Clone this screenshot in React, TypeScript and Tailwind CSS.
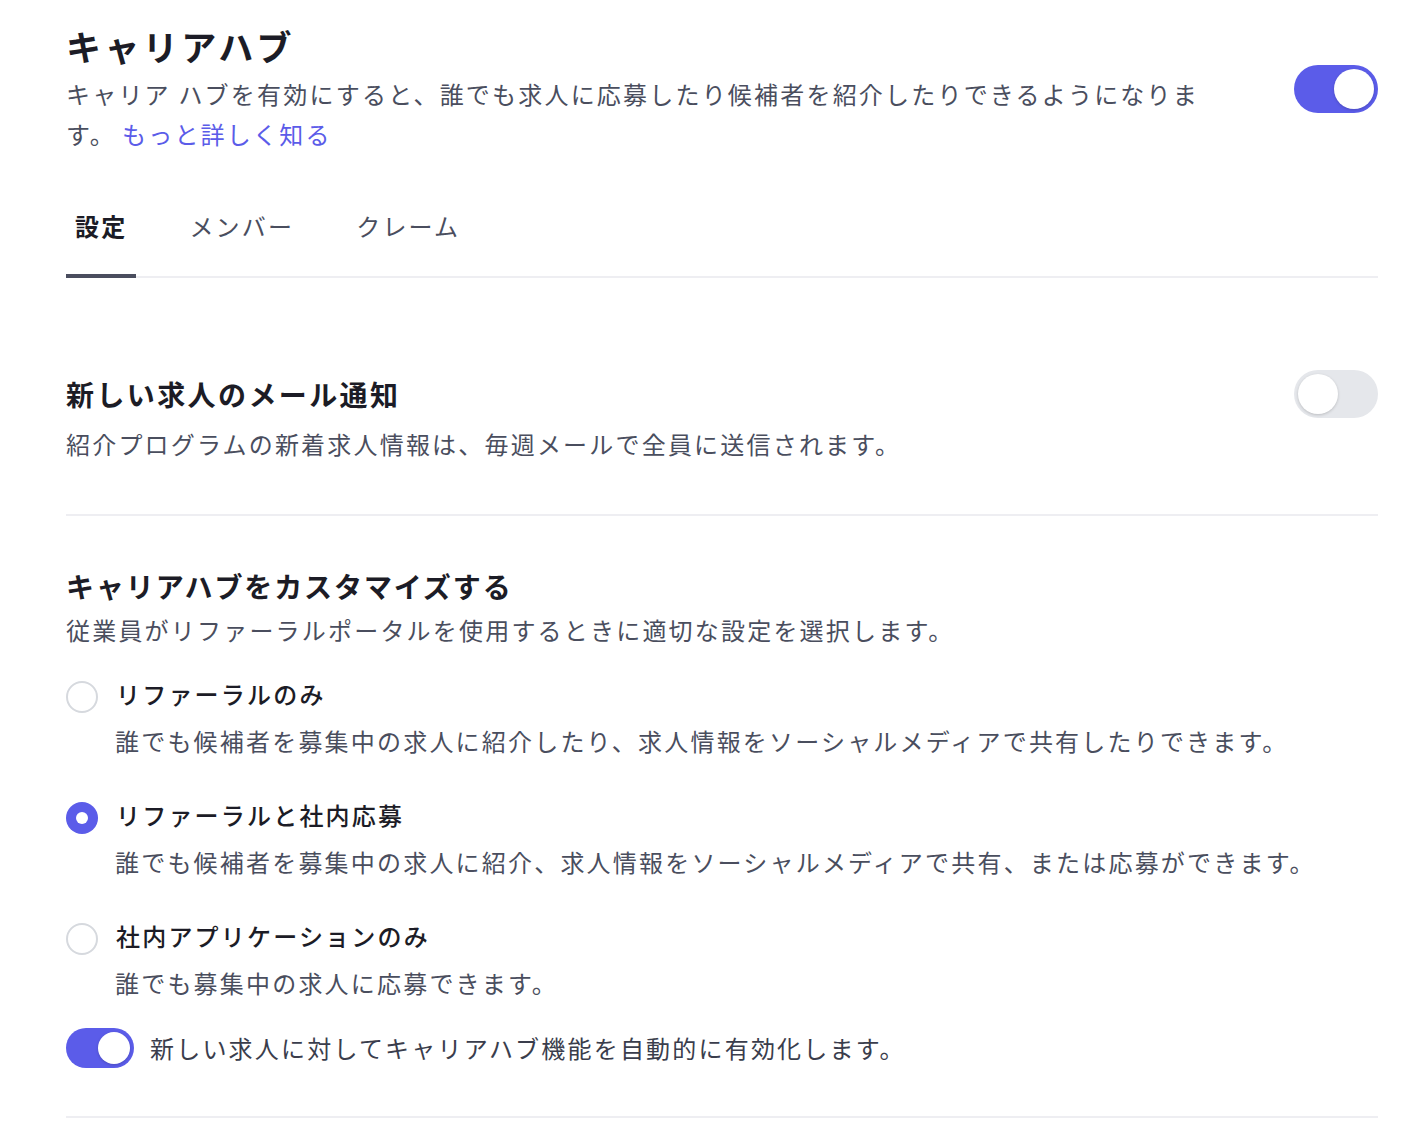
import { useState } from 'react';

const font = { fontFamily: '"Noto Sans CJK JP", "Noto Sans", sans-serif' };

function Toggle({ on, size = 'lg', onChange }: { on: boolean; size?: 'lg' | 'sm'; onChange: () => void }) {
  const big = size === 'lg';
  return (
    <button
      onClick={onChange}
      className={
        (big ? 'w-[84px] h-[48px] ' : 'w-[68px] h-[40px] ') +
        'shrink-0 rounded-full flex items-center px-[4px] transition-colors ' +
        (on ? 'bg-[#5b5ce9] justify-end' : 'bg-[#e5e7eb] justify-start')
      }
    >
      <span
        className={
          (big ? 'w-[40px] h-[40px] ' : 'w-[32px] h-[32px] ') +
          'rounded-full bg-white shadow-[0_1px_3px_rgba(0,0,0,0.18)]'
        }
      />
    </button>
  );
}

function Radio({ checked }: { checked: boolean }) {
  return checked ? (
    <span className="mt-[7px] w-[32px] h-[32px] rounded-full bg-[#5b5ce9] flex items-center justify-center shrink-0">
      <span className="w-[12px] h-[12px] rounded-full bg-white" />
    </span>
  ) : (
    <span className="mt-[7px] w-[32px] h-[32px] rounded-full border-2 border-[#d6d9de] bg-white shrink-0" />
  );
}

const options = [
  {
    id: 'referral',
    label: 'リファーラルのみ',
    desc: '誰でも候補者を募集中の求人に紹介したり、求人情報をソーシャルメディアで共有したりできます。',
  },
  {
    id: 'both',
    label: 'リファーラルと社内応募',
    desc: '誰でも候補者を募集中の求人に紹介、求人情報をソーシャルメディアで共有、または応募ができます。',
  },
  {
    id: 'internal',
    label: '社内アプリケーションのみ',
    desc: '誰でも募集中の求人に応募できます。',
  },
];

export default function App() {
  const [hubOn, setHubOn] = useState(true);
  const [mailOn, setMailOn] = useState(false);
  const [autoOn, setAutoOn] = useState(true);
  const [mode, setMode] = useState('both');
  const tabs = ['設定', 'メンバー', 'クレーム'];

  return (
    <div style={font} className="min-h-screen bg-white pl-[66px] pr-[40px] pt-[24px] text-[#1c1c26]">
      <div className="flex items-center justify-between">
        <div>
          <h1 className="text-[35px] leading-[44px] font-bold tracking-[3.4px]">キャリアハブ</h1>
          <p className="mt-[6px] w-[1160px] text-[24px] leading-[40px] tracking-[2.2px] text-[#4a4e5e]">
            キャリア ハブを有効にすると、誰でも求人に応募したり候補者を紹介したりできるようになります。
            <a href="#" className="ml-[6px] text-[#5b5ce9]">もっと詳しく知る</a>
          </p>
        </div>
        <Toggle on={hubOn} onChange={() => setHubOn(!hubOn)} />
      </div>

      <div className="mt-[46px] flex gap-[44px] border-b-2 border-[#eeeef2]">
        {tabs.map((t, i) => (
          <button
            key={t}
            className={
              'px-[9px] pt-[10px] pb-[32px] -mb-[2px] text-[24px] leading-[32px] tracking-[2.2px] border-b-4 ' +
              (i === 0 ? 'border-[#4a4d5e] font-bold text-[#1c1c26]' : 'border-transparent text-[#4a4e5e]')
            }
          >
            {t}
          </button>
        ))}
      </div>

      <div className="pt-[92px] pb-[50px] border-b-2 border-[#eeeef2]">
        <div className="flex items-center justify-between">
          <h2 className="text-[28px] leading-[40px] font-bold tracking-[2.4px]">新しい求人のメール通知</h2>
          <Toggle on={mailOn} onChange={() => setMailOn(!mailOn)} />
        </div>
        <p className="mt-[6px] text-[24px] leading-[40px] tracking-[2.2px] text-[#4a4e5e]">
          紹介プログラムの新着求人情報は、毎週メールで全員に送信されます。
        </p>
      </div>

      <div className="pt-[50px] pb-[48px] border-b-2 border-[#eeeef2]">
        <h2 className="text-[28px] leading-[40px] font-bold tracking-[1.9px]">キャリアハブをカスタマイズする</h2>
        <p className="mt-[4px] text-[24px] leading-[40px] tracking-[2.2px] text-[#4a4e5e]">
          従業員がリファーラルポータルを使用するときに適切な設定を選択します。
        </p>

        <div className="mt-[24px] flex flex-col gap-[34px]">
          {options.map((o) => (
            <div key={o.id} className="cursor-pointer" onClick={() => setMode(o.id)}>
              <div className="flex items-start gap-[18px]">
                <Radio checked={mode === o.id} />
                <span className="text-[24px] leading-[40px] tracking-[2.2px] font-medium text-[#1c1c26]">{o.label}</span>
              </div>
              <p className="mt-[7px] pl-[49px] text-[24px] leading-[40px] tracking-[2.2px] text-[#4a4e5e]">{o.desc}</p>
            </div>
          ))}
        </div>

        <div className="mt-[25px] flex items-center gap-[16px]">
          <Toggle size="sm" on={autoOn} onChange={() => setAutoOn(!autoOn)} />
          <span className="text-[24px] leading-[40px] tracking-[2.2px] text-[#3a3d4c]">
            新しい求人に対してキャリアハブ機能を自動的に有効化します。
          </span>
        </div>
      </div>
    </div>
  );
}
